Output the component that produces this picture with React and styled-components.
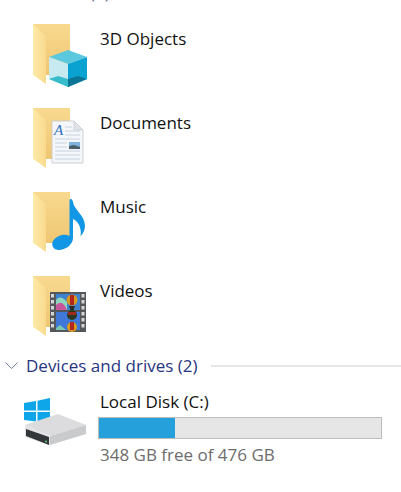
import React from "react";
import styled, { createGlobalStyle } from "styled-components";

const Global = createGlobalStyle`
  html, body { margin: 0; padding: 0; background: #fff; overflow: hidden; }
  body { font-family: "Open Sans", "Noto Sans", "Liberation Sans", sans-serif; }
`;

const Page = styled.div`
  width: 401px;
  height: 492px;
  overflow: hidden;
  background: #fff;
  display: flex;
  flex-direction: column;
`;

const ClippedHeader = styled.div`
  height: 3px;
  overflow: hidden;
  padding-left: 90px;
  color: #6a6f8c;
  font-size: 17px;
  line-height: 20px;
  & > span { display: block; margin-top: -17px; }
`;

const FolderList = styled.div`
  display: flex;
  flex-direction: column;
  padding-top: 17px;
`;

const FolderRow = styled.div`
  height: 84px;
  display: flex;
  gap: 10px;
  padding-left: 30px;
`;

const IconBox = styled.div`
  width: 60px;
  height: 68px;
  flex: none;
  & > svg { display: block; }
`;

const FolderName = styled.div`
  color: #111;
  font-size: 17px;
  line-height: 22px;
  padding-top: 8px;
`;

const SectionHeader = styled.div`
  height: 24px;
  margin-top: -2px;
  display: flex;
  align-items: center;
  padding-left: 5px;
`;

const Chevron = styled.svg`
  width: 13px;
  height: 8px;
  flex: none;
  margin-right: 8px;
`;

const SectionTitle = styled.div`
  color: #27357f;
  font-size: 17px;
  line-height: 22px;
  white-space: nowrap;
`;

const Rule = styled.div`
  flex: 1;
  height: 2px;
  margin-left: 13px;
  background: #e6e6e6;
`;

const DriveRow = styled.div`
  display: flex;
  padding-top: 13px;
`;

const DriveIconBox = styled.div`
  width: 98px;
  flex: none;
  padding-top: 20px;
  margin-top: -13px;
  & > svg { display: block; overflow: visible; }
`;

const DriveDetails = styled.div`
  width: 284px;
  display: flex;
  flex-direction: column;
`;

const DriveName = styled.div`
  color: #111;
  font-size: 17px;
  line-height: 22px;
  padding-left: 2px;
`;

const Bar = styled.div`
  height: 22px;
  box-sizing: border-box;
  border: 1px solid #bcbcbc;
  background: #e6e6e6;
  margin-top: 4px;
`;

const BarFill = styled.div`
  height: 100%;
  background: #26a0da;
`;

const DriveFree = styled.div`
  color: #6d6d6d;
  font-size: 17px;
  line-height: 22px;
  padding: 5px 0 0 2px;
`;

const FolderBase = () => (
  <>
    <defs>
      <linearGradient id="flap" x1="0" y1="0" x2="1" y2="0">
        <stop offset="0" stopColor="#fdeaa8" />
        <stop offset="1" stopColor="#f9da8e" />
      </linearGradient>
      <linearGradient id="back" x1="0" y1="0" x2="0" y2="1">
        <stop offset="0" stopColor="#f8d98f" />
        <stop offset="1" stopColor="#eec673" />
      </linearGradient>
    </defs>
    <rect x="3" y="4" width="37" height="51" fill="url(#back)" />
    <path d="M3 4 L16 16 L16 64 L3 55 Z" fill="url(#flap)" />
  </>
);

const Objects3D = () => (
  <svg width="60" height="68" viewBox="0 0 60 68">
    <FolderBase />
    <path d="M19 37 L38 30 L57 37 L38 44 Z" fill="#5cc8dd" />
    <path d="M19 37 L38 44 L38 67 L19 59 Z" fill="#c6eaef" />
    <path d="M38 44 L57 37 L57 59 L38 67 Z" fill="#0aa2d0" />
    <path d="M19 59 L28 56 L38 59 L38 67 Z" fill="#38bccb" />
    <path d="M38 59 L48 56 L57 59 L38 67 Z" fill="#0b7595" />
  </svg>
);

const DocLetter = styled.text`
  font-family: "Liberation Serif", serif;
  font-style: italic;
  font-size: 15px;
  fill: #2e6fc0;
`;

const Docs = () => (
  <svg width="60" height="68" viewBox="0 0 60 68">
    <FolderBase />
    <path d="M22 17 L44 17 L53 26 L53 59 L22 59 Z" fill="#f4f6f9" stroke="#c3c8ce" strokeWidth="0.8" />
    <path d="M44 17 L44 26 L53 26 Z" fill="#dfe3e8" stroke="#c3c8ce" strokeWidth="0.6" />
    <g stroke="#bccbdb" strokeWidth="0.8">
      <path d="M35 23 H42 M35 27 H50 M35 31 H50 M25 35 H50 M25 39 H37 M25 43 H37 M25 47 H50 M25 51 H50 M25 55 H50" />
    </g>
    <DocLetter x="24" y="31">A</DocLetter>
    <rect x="39" y="38" width="11" height="7" fill="#7fb4dc" />
    <path d="M39 45 L39 42 L44 41 L50 43 L50 45 Z" fill="#4c5f66" />
  </svg>
);

const Music = () => (
  <svg width="60" height="68" viewBox="0 0 60 68">
    <FolderBase />
    <path
      d="M39.5 13 C39.5 10 42.5 10.5 43 14 C44 22 55 27 55 38 C55 42 53 46 50.5 48 C52 40 48 33 43 31 L43 50 C43 57 35 62 29 62 C23 62 21 57 23 53 C26 48 34 45 39.5 48 Z"
      fill="#1296e6"
    />
  </svg>
);

const Videos = () => (
  <svg width="60" height="68" viewBox="0 0 60 68">
    <FolderBase />
    <rect x="20" y="20" width="36" height="40" fill="#55585a" />
    <g fill="#d6d6d6">
      {[22, 28, 34, 40, 46, 52].map((y) => (
        <React.Fragment key={y}>
          <rect x="21" y={y} width="3" height="3.5" />
          <rect x="51.5" y={y} width="3" height="3.5" />
        </React.Fragment>
      ))}
    </g>
    <rect x="26" y="22" width="24" height="16" fill="#3f82d0" />
    <rect x="26" y="40" width="24" height="18" fill="#3f78d8" />
    <path d="M26 28 C29 24 33 25 37 30 L37 38 L26 38 Z" fill="#8fd8c0" />
    <path d="M26 33 C30 29 33 31 35 34 L37 38 L26 38 Z" fill="#c9559b" />
    <path d="M26 56 L30 53 L36 58 L26 58 Z" fill="#7ec8b0" />
    <circle cx="42" cy="28" r="5.5" fill="#d99a1c" />
    <path d="M40 23 H44 V33 H40 Z" fill="#b3261e" />
    <path d="M39 34 H45 L43.5 38 H40.5 Z" fill="#2a2a20" />
    <circle cx="42" cy="43" r="5" fill="#2a3a20" />
    <path d="M38 40 H46 V43 H38 Z" fill="#a12a1e" />
    <circle cx="42" cy="55" r="5" fill="#d99a1c" />
    <path d="M40 50 H44 V58 H40 Z" fill="#b3261e" />
  </svg>
);

const Drive = () => (
  <svg width="98" height="50" viewBox="0 0 98 50">
    <g fill="#0ea5e9">
      <path d="M24 5 L36 3 L36 12.5 L24 12.5 Z" />
      <path d="M37.5 2.7 L50 0 L50 12.5 L37.5 12.5 Z" />
      <path d="M24 14 L36 14 L36 23.5 L24 22 Z" />
      <path d="M37.5 14 L50 14 L50 26 L37.5 24 Z" />
    </g>
    <path d="M25 27 L58 16 L86 27 L50 38 Z" fill="#dcdcde" />
    <path d="M50 38 L86 27 L86 36 L50 47 Z" fill="#c9cacc" />
    <path d="M25 27 L50 38 L50 47 L25 39 Z" fill="#e2e2e4" />
    <path d="M26 31 L49 39 L49 47 L26 38 Z" fill="#34373a" />
    <circle cx="46" cy="43.5" r="1" fill="#5fd07a" />
  </svg>
);

const folders = [
  { name: "3D Objects", Icon: Objects3D },
  { name: "Documents", Icon: Docs },
  { name: "Music", Icon: Music },
  { name: "Videos", Icon: Videos },
];

export default function App() {
  const usedPercent = ((476 - 348) / 476) * 100;
  return (
    <Page>
      <Global />
      <ClippedHeader>
        <span>(7)</span>
      </ClippedHeader>
      <FolderList>
        {folders.map(({ name, Icon }) => (
          <FolderRow key={name}>
            <IconBox>
              <Icon />
            </IconBox>
            <FolderName>{name}</FolderName>
          </FolderRow>
        ))}
      </FolderList>
      <SectionHeader>
        <Chevron viewBox="0 0 13 8">
          <path d="M0.5 0.5 L6.5 6.5 L12.5 0.5" fill="none" stroke="#6f7f99" strokeWidth="1" />
        </Chevron>
        <SectionTitle>Devices and drives (2)</SectionTitle>
        <Rule />
      </SectionHeader>
      <DriveRow>
        <DriveIconBox>
          <Drive />
        </DriveIconBox>
        <DriveDetails>
          <DriveName>Local Disk (C:)</DriveName>
          <Bar>
            <BarFill style={{ width: `${usedPercent}%` }} />
          </Bar>
          <DriveFree>348 GB free of 476 GB</DriveFree>
        </DriveDetails>
      </DriveRow>
    </Page>
  );
}
